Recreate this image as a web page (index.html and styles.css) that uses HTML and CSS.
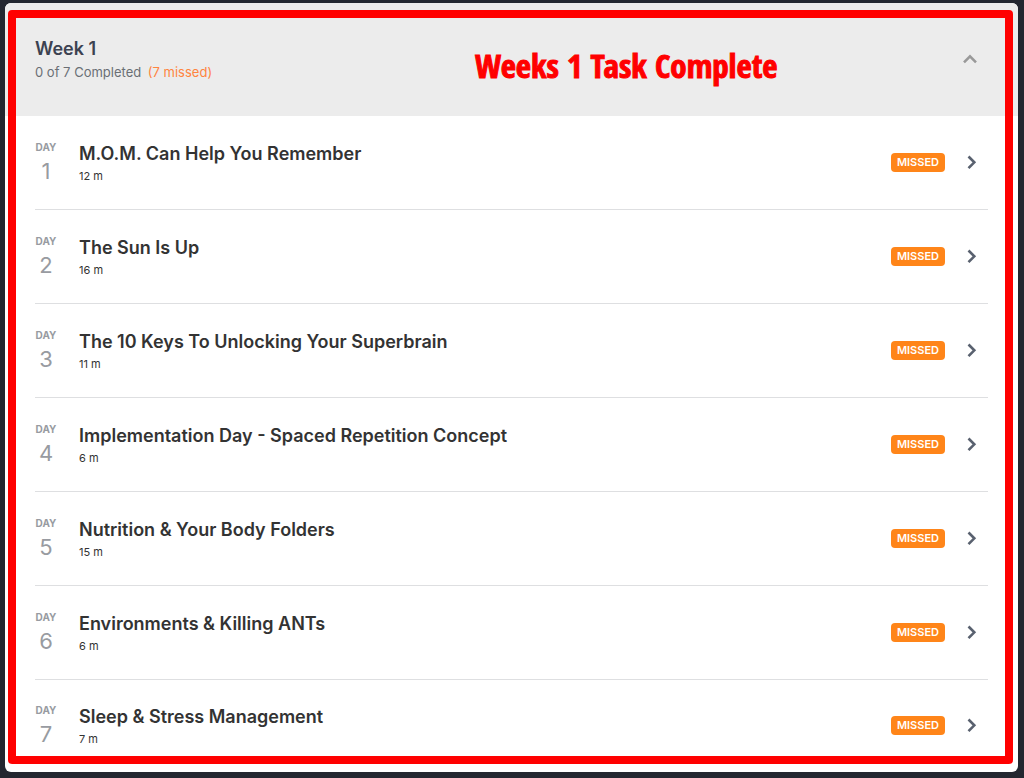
FILE: index.html
```html
<!DOCTYPE html>
<html lang="en">
<head>
<meta charset="utf-8">
<meta name="viewport" content="width=device-width, initial-scale=1">
<title>Week 1</title>
<link rel="stylesheet" href="styles.css">
</head>
<body>
<main class="card">
  <header class="week">
    <div class="week-info">
      <h1 class="week-title">Week 1</h1>
      <p class="week-progress">0 of 7 Completed <span class="week-missed">(7 missed)</span></p>
    </div>
    <button class="toggle" type="button" aria-label="Collapse week" aria-expanded="true">
      <svg width="14" height="10" viewBox="0 0 14 10"><path d="M1 8.300 7 2.300l6 6"/></svg>
    </button>
  </header>
  <ul class="days">
    <li><a class="day" href="#"><span class="day-no"><span class="day-label">DAY</span><span class="day-num">1</span></span><span class="lesson"><span class="lesson-title">M.O.M. Can Help You Remember</span><span class="lesson-time">12 m</span></span><span class="badge">MISSED</span><svg class="arrow" width="10" height="14" viewBox="0 0 10 14"><path d="M1.500 1.500 7.300 7.300l-5.800 5.800"/></svg></a></li>
    <li><a class="day" href="#"><span class="day-no"><span class="day-label">DAY</span><span class="day-num">2</span></span><span class="lesson"><span class="lesson-title">The Sun Is Up</span><span class="lesson-time">16 m</span></span><span class="badge">MISSED</span><svg class="arrow" width="10" height="14" viewBox="0 0 10 14"><path d="M1.500 1.500 7.300 7.300l-5.800 5.800"/></svg></a></li>
    <li><a class="day" href="#"><span class="day-no"><span class="day-label">DAY</span><span class="day-num">3</span></span><span class="lesson"><span class="lesson-title">The 10 Keys To Unlocking Your Superbrain</span><span class="lesson-time">11 m</span></span><span class="badge">MISSED</span><svg class="arrow" width="10" height="14" viewBox="0 0 10 14"><path d="M1.500 1.500 7.300 7.300l-5.800 5.800"/></svg></a></li>
    <li><a class="day" href="#"><span class="day-no"><span class="day-label">DAY</span><span class="day-num">4</span></span><span class="lesson"><span class="lesson-title">Implementation Day - Spaced Repetition Concept</span><span class="lesson-time">6 m</span></span><span class="badge">MISSED</span><svg class="arrow" width="10" height="14" viewBox="0 0 10 14"><path d="M1.500 1.500 7.300 7.300l-5.800 5.800"/></svg></a></li>
    <li><a class="day" href="#"><span class="day-no"><span class="day-label">DAY</span><span class="day-num">5</span></span><span class="lesson"><span class="lesson-title">Nutrition &amp; Your Body Folders</span><span class="lesson-time">15 m</span></span><span class="badge">MISSED</span><svg class="arrow" width="10" height="14" viewBox="0 0 10 14"><path d="M1.500 1.500 7.300 7.300l-5.800 5.800"/></svg></a></li>
    <li><a class="day" href="#"><span class="day-no"><span class="day-label">DAY</span><span class="day-num">6</span></span><span class="lesson"><span class="lesson-title">Environments &amp; Killing ANTs</span><span class="lesson-time">6 m</span></span><span class="badge">MISSED</span><svg class="arrow" width="10" height="14" viewBox="0 0 10 14"><path d="M1.500 1.500 7.300 7.300l-5.800 5.800"/></svg></a></li>
    <li><a class="day" href="#"><span class="day-no"><span class="day-label">DAY</span><span class="day-num">7</span></span><span class="lesson"><span class="lesson-title">Sleep &amp; Stress Management</span><span class="lesson-time">7 m</span></span><span class="badge">MISSED</span><svg class="arrow" width="10" height="14" viewBox="0 0 10 14"><path d="M1.500 1.500 7.300 7.300l-5.800 5.800"/></svg></a></li>
  </ul>
  <div class="frame"></div>
  <p class="note">Weeks 1 Task Complete</p>
</main>
</body>
</html>
```

FILE: styles.css
```css
* { box-sizing: border-box; }
body {
  margin: 0;
  padding: 3px 6px 5px 5px;
  background: #232730;
  color: #333;
  font-family: Inter, "Open Sans", sans-serif;
}
.card {
  position: relative;
  background: #fff;
  border-radius: 6px;
  overflow: hidden;
}
.week {
  display: flex;
  justify-content: space-between;
  align-items: flex-start;
  background: #ececec;
  padding: 34px 41px 33px 30px;
}
.week-title {
  margin: 0;
  font-size: 18px;
  line-height: 24px;
  font-weight: 600;
  color: #3c4251;
}
.week-progress {
  margin: 0;
  font-size: 13px;
  line-height: 22px;
  color: #6a6f75;
}
.week-missed { margin-left: 3px; color: #ff8440; }
.toggle {
  display: flex;
  margin-top: 17px;
  padding: 0;
  border: 0;
  background: none;
}
.toggle path { fill: none; stroke: #999; stroke-width: 2.600; }
.days {
  list-style: none;
  margin: 0;
  padding: 0 30px;
}
.days li + li { border-top: 1px solid #dedfe1; }
.day {
  display: flex;
  align-items: center;
  padding: 22px 11px 23px 0;
  color: inherit;
  text-decoration: none;
}
.days li:last-child .day { padding: 21px 11px 23px 0; }
.day-no {
  display: flex;
  flex-direction: column;
  align-items: center;
  width: 22px;
  margin-right: 22px;
  color: #989ba1;
}
.day-label { font-size: 10px; line-height: 18px; font-weight: 700; }
.day-num { font-size: 22px; line-height: 30px; }
.lesson { display: flex; flex-direction: column; flex: 1; padding-top: 2px; }
.lesson-title { font-size: 18px; line-height: 26px; font-weight: 600; }
.lesson-time { font-size: 11px; line-height: 18px; }
.badge {
  padding: 0 6px;
  border-radius: 4px;
  background: #ff8519;
  color: #fff;
  font-size: 11px;
  line-height: 19px;
  font-weight: 600;
}
.arrow { margin-left: 22px; }
.arrow path { fill: none; stroke: #59616f; stroke-width: 2.600; }
.frame {
  position: absolute;
  inset: 7px 5px 8px 3px;
  border: 8px solid #f00;
  border-radius: 4px;
  pointer-events: none;
}
.note {
  position: absolute;
  top: 43px;
  left: 470px;
  margin: 0;
  color: #f00;
  font-family: "Open Sans Condensed", "Liberation Sans Narrow", Lato, sans-serif;
  font-size: 33px;
  line-height: 40px;
  font-weight: 700;
  -webkit-text-stroke: 1px #f00;
}
```
